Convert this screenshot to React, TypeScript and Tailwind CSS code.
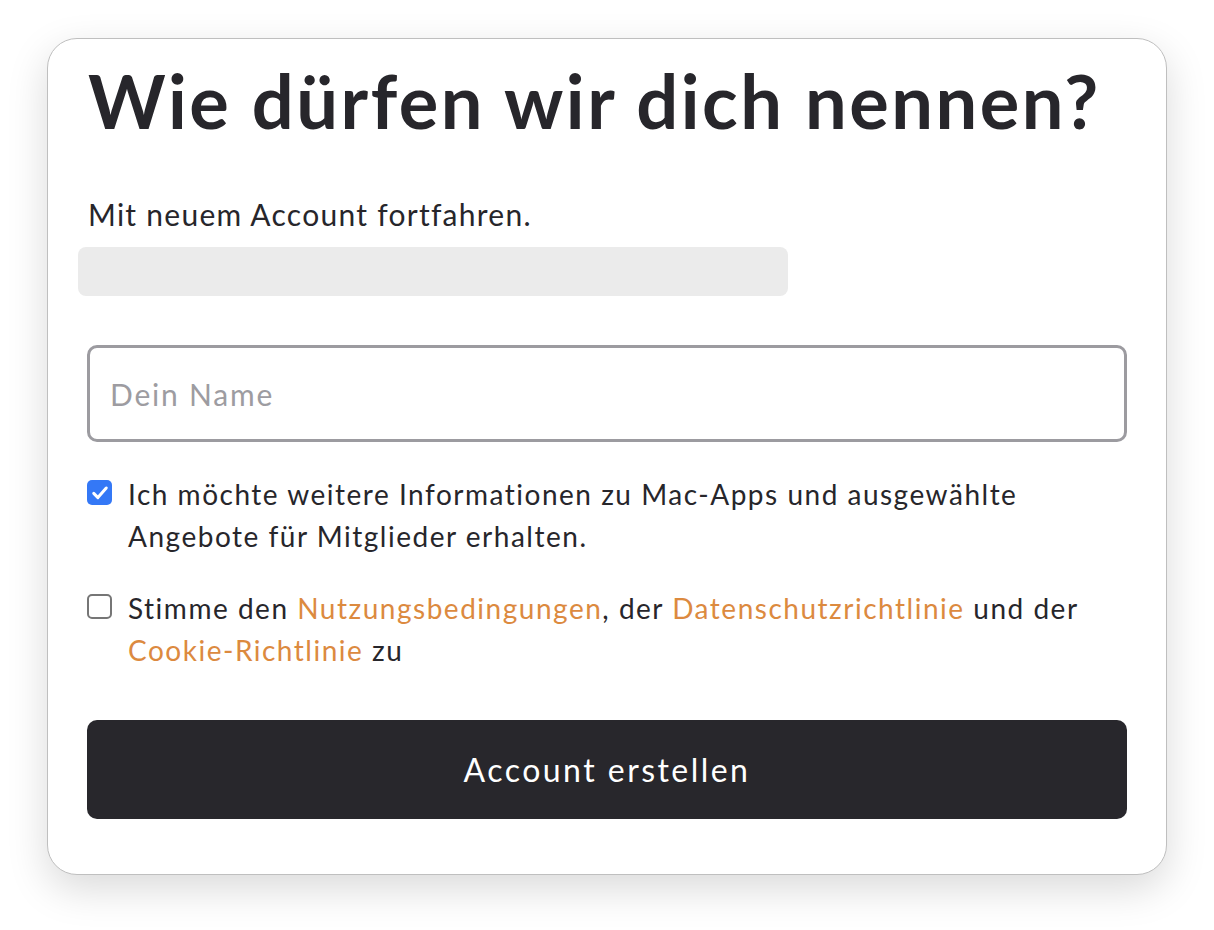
import { useState } from "react";

function Checkbox({ checked, onChange }: { checked: boolean; onChange: () => void }) {
	return (
		<button
			type="button"
			onClick={onChange}
			className={
				checked
					? "mt-[7px] flex h-[25px] w-[25px] shrink-0 items-center justify-center rounded-[5px] bg-[#3478f6]"
					: "mt-[7px] h-[25px] w-[25px] shrink-0 rounded-[5px] border-2 border-[#767676] bg-white"
			}
		>
			{checked && (
				<svg viewBox="0 0 24 24" className="h-[20px] w-[20px]" fill="none">
					<path
						d="M4.5 12.5l5 5L19.5 6"
						stroke="white"
						strokeWidth="3.6"
						strokeLinecap="round"
						strokeLinejoin="round"
					/>
				</svg>
			)}
		</button>
	);
}

export default function App() {
	const [newsletter, setNewsletter] = useState(true);
	const [terms, setTerms] = useState(false);

	return (
		<div className="min-h-screen bg-white pt-[38px] font-['Lato','Noto_Sans',sans-serif] text-[#27262b]">
			<div className="mx-auto w-[1120px] rounded-[30px] border border-[#bfbfbf] bg-white px-[39px] pb-[55px] pt-[19px] shadow-[0_14px_40px_rgba(0,0,0,0.15)]">
				<h1 className="ml-px text-[74px] font-bold leading-[86px] tracking-[0.034em]">
					Wie dürfen wir dich nennen?
				</h1>

				<p className="ml-px mt-[50px] text-[30px] leading-[40px] tracking-[0.042em]">
					Mit neuem Account fortfahren.
				</p>

				<div className="-ml-[9px] mt-[13px] h-[49px] w-[710px] rounded-[8px] bg-[#ebebeb]" />

				<input
					type="text"
					placeholder="Dein Name"
					className="mt-[49px] h-[97px] w-full rounded-[10px] border-[3px] border-[#9c9ba0] px-[20px] text-[30px] tracking-[0.06em] text-[#27262b] outline-none placeholder:text-[#9d9ca1]"
				/>

				<div className="mt-[31px] flex gap-[16px]">
					<Checkbox checked={newsletter} onChange={() => setNewsletter(!newsletter)} />
					<p className="text-[28px] leading-[42px] tracking-[0.054em]">
						Ich möchte weitere Informationen zu Mac-Apps und ausgewählte
						<br />
						Angebote für Mitglieder erhalten.
					</p>
				</div>

				<div className="mt-[30px] flex gap-[16px]">
					<Checkbox checked={terms} onChange={() => setTerms(!terms)} />
					<p className="text-[28px] leading-[42px] tracking-[0.054em]">
						Stimme den <a className="text-[#dc8a3f]">Nutzungsbedingungen</a>, der{" "}
						<a className="text-[#dc8a3f]">Datenschutzrichtlinie</a> und der
						<br />
						<a className="text-[#dc8a3f]">Cookie-Richtlinie</a> zu
					</p>
				</div>

				<button
					type="button"
					className="mt-[49px] h-[99px] w-full rounded-[10px] bg-[#28272c] text-[32px] tracking-[0.077em] text-white"
				>
					Account erstellen
				</button>
			</div>
		</div>
	);
}
